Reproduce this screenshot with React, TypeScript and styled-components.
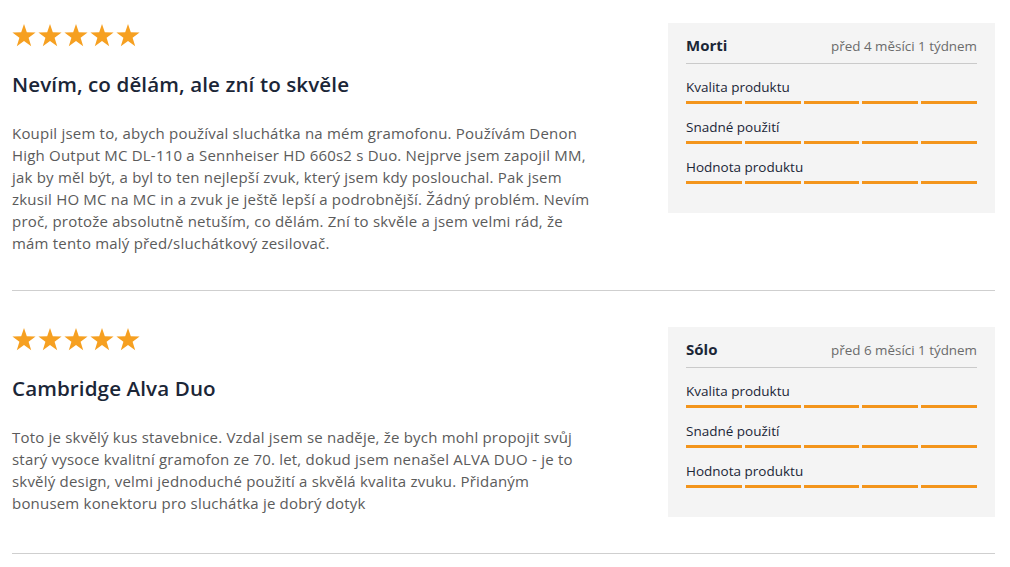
import React from 'react';
import styled, { createGlobalStyle } from 'styled-components';

const GlobalStyle = createGlobalStyle`
  html, body {
    margin: 0;
    padding: 0;
    background: #fff;
  }
  body {
    font-family: 'Open Sans', 'Liberation Sans', sans-serif;
  }
`;

const Page = styled.div`
  padding: 23px 15px 0 12px;
`;

const ReviewRow = styled.div`
  display: grid;
  grid-template-columns: 1fr 327px;
  column-gap: 70px;
  align-items: start;
  padding-bottom: 36px;
  border-bottom: 1px solid #cfcfcf;
  & + & {
    padding-top: 36px;
  }
`;

const Main = styled.div`
  display: flex;
  flex-direction: column;
`;

const Stars = styled.div`
  display: flex;
  gap: 2px;
  padding-top: 1px;
`;

const Title = styled.h3`
  margin: 23px 0 0;
  font-family: 'Open Sans', 'Liberation Sans', sans-serif;
  font-size: 20.6px;
  font-weight: 600;
  letter-spacing: 0.1px;
  line-height: 28px;
  color: #1b2637;
`;

const Body = styled.p`
  margin: 24px 0 0;
  font-size: 15px;
  letter-spacing: 0.2px;
  line-height: 22px;
  color: #5b5b5b;
`;

const Panel = styled.div`
  background: #f4f4f4;
  padding: 12px 18px 29px;
`;

const PanelHead = styled.div`
  display: flex;
  justify-content: space-between;
  align-items: baseline;
  padding-bottom: 8px;
  border-bottom: 1px solid #cacaca;
`;

const Author = styled.span`
  font-size: 15px;
  font-weight: 700;
  color: #1b2637;
`;

const When = styled.span`
  font-size: 13.4px;
  color: #6b6b6b;
`;

const Criterion = styled.div`
  margin-top: 14px;
  & + & {
    margin-top: 14px;
  }
`;

const Label = styled.div`
  font-size: 13.5px;
  line-height: 18px;
  color: #1b2637;
`;

const Bars = styled.div`
  display: grid;
  grid-template-columns: repeat(5, 1fr);
  gap: 3px;
  margin-top: 5px;
`;

const Bar = styled.div<{ $on: boolean }>`
  height: 3px;
  background: ${p => (p.$on ? '#f3951c' : '#ddd')};
`;

const Star = () => (
  <svg width="24" height="23" viewBox="0 0 24 23">
    <polygon
      fill="#f6a021"
      points="12,0 14.8,8.3 23.6,8.4 16.6,13.7 19.2,22.2 12,17.1 4.8,22.2 7.4,13.7 0.4,8.4 9.2,8.3"
    />
  </svg>
);

type ReviewType = {
  title: string;
  text: string;
  author: string;
  when: string;
  rating: number;
};

const criteria = ['Kvalita produktu', 'Snadné použití', 'Hodnota produktu'];

const reviews: ReviewType[] = [
  {
    title: 'Nevím, co dělám, ale zní to skvěle',
    text:
      'Koupil jsem to, abych používal sluchátka na mém gramofonu. Používám Denon High Output MC DL-110 a Sennheiser HD 660s2 s Duo. Nejprve jsem zapojil MM, jak by měl být, a byl to ten nejlepší zvuk, který jsem kdy poslouchal. Pak jsem zkusil HO MC na MC in a zvuk je ještě lepší a podrobnější. Žádný problém. Nevím proč, protože absolutně netuším, co dělám. Zní to skvěle a jsem velmi rád, že mám tento malý před/sluchátkový zesilovač.',
    author: 'Morti',
    when: 'před 4 měsíci 1 týdnem',
    rating: 5,
  },
  {
    title: 'Cambridge Alva Duo',
    text:
      'Toto je skvělý kus stavebnice. Vzdal jsem se naděje, že bych mohl propojit svůj starý vysoce kvalitní gramofon ze 70. let, dokud jsem nenašel ALVA DUO - je to skvělý design, velmi jednoduché použití a skvělá kvalita zvuku. Přidaným bonusem konektoru pro sluchátka je dobrý dotyk',
    author: 'Sólo',
    when: 'před 6 měsíci 1 týdnem',
    rating: 5,
  },
];

const Review: React.FC<{ review: ReviewType }> = ({ review }) => (
  <ReviewRow>
    <Main>
      <Stars>
        {[0, 1, 2, 3, 4].map(i => (
          <Star key={i} />
        ))}
      </Stars>
      <Title>{review.title}</Title>
      <Body>{review.text}</Body>
    </Main>
    <Panel>
      <PanelHead>
        <Author>{review.author}</Author>
        <When>{review.when}</When>
      </PanelHead>
      {criteria.map(c => (
        <Criterion key={c}>
          <Label>{c}</Label>
          <Bars>
            {[0, 1, 2, 3, 4].map(i => (
              <Bar key={i} $on={i < review.rating} />
            ))}
          </Bars>
        </Criterion>
      ))}
    </Panel>
  </ReviewRow>
);

const App: React.FC = () => (
  <>
    <GlobalStyle />
    <Page>
      {reviews.map(r => (
        <Review key={r.author} review={r} />
      ))}
    </Page>
  </>
);

export default App;
